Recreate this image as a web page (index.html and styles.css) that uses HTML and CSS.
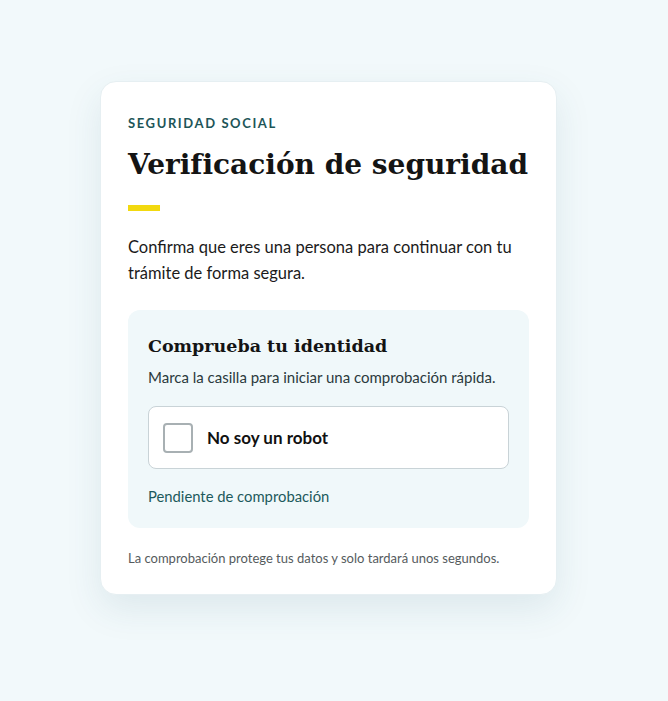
FILE: index.html
```html
<!DOCTYPE html>
<html lang="es">
<head>
<meta charset="utf-8">
<title>Verificación de seguridad</title>
<link rel="stylesheet" href="styles.css">
</head>
<body>
<main class="page">
  <section class="card">
    <p class="eyebrow">SEGURIDAD SOCIAL</p>
    <h1 class="title">Verificación de seguridad</h1>
    <div class="accent"></div>
    <p class="lead">Confirma que eres una persona para continuar con tu trámite de forma segura.</p>
    <div class="panel">
      <h2 class="panel-title">Comprueba tu identidad</h2>
      <p class="panel-text">Marca la casilla para iniciar una comprobación rápida.</p>
      <label class="check">
        <span class="box"></span>
        <span class="check-label">No soy un robot</span>
      </label>
      <p class="status">Pendiente de comprobación</p>
    </div>
    <p class="note">La comprobación protege tus datos y solo tardará unos segundos.</p>
  </section>
</main>
</body>
</html>
```
FILE: styles.css
```css
html, body {
  margin: 0;
  padding: 0;
}
body {
  background: #f2f9fb;
  font-family: "Lato", "Noto Sans", sans-serif;
  color: #1b1b1b;
}
.page {
  display: flex;
  justify-content: center;
  padding: 81px 11px 0 0;
  min-height: 701px;
  box-sizing: border-box;
}
.card {
  width: 457px;
  height: 514px;
  box-sizing: border-box;
  background: #ffffff;
  border-radius: 16px;
  border: 1px solid #e6eff2;
  box-shadow: 0 14px 36px rgba(40, 90, 110, 0.10);
  padding: 33px 27px 0 27px;
}
.eyebrow {
  margin: 0;
  font-size: 13px;
  font-weight: 700;
  letter-spacing: 1.6px;
  color: #1d5558;
  line-height: 16px;
}
.title {
  margin: 14px 0 0 0;
  font-family: "DejaVu Serif", "Liberation Serif", serif;
  font-weight: 700;
  font-size: 28px;
  line-height: 40px;
  color: #141414;
  letter-spacing: 0;
  white-space: nowrap;
}
.accent {
  width: 32px;
  height: 6px;
  background: #f2d90f;
  margin-top: 20px;
}
.lead {
  margin: 23px 0 0 0;
  font-size: 16.5px;
  line-height: 26px;
  color: #1b1b1b;
}
.panel {
  margin-top: 24px;
  background: #f0f8fa;
  border-radius: 12px;
  padding: 23px 20px 22px 20px;
}
.panel-title {
  margin: 0;
  font-family: "DejaVu Serif", "Liberation Serif", serif;
  font-weight: 700;
  font-size: 17.5px;
  line-height: 26px;
  color: #141414;
}
.panel-text {
  margin: 8px 0 0 0;
  font-size: 15px;
  line-height: 20px;
  color: #2b3a3d;
}
.check {
  margin-top: 19px;
  display: flex;
  align-items: center;
  gap: 14px;
  height: 63px;
  box-sizing: border-box;
  background: #ffffff;
  border: 1px solid #c9d3d7;
  border-radius: 8px;
  padding: 0 14px;
  cursor: pointer;
}
.box {
  width: 30px;
  height: 30px;
  box-sizing: border-box;
  border: 2px solid #a8b0b3;
  border-radius: 4px;
  background: #ffffff;
}
.check-label {
  font-size: 17px;
  font-weight: 700;
  color: #111111;
}
.status {
  margin: 17px 0 0 0;
  font-size: 14.8px;
  line-height: 20px;
  color: #1d5a5c;
}
.note {
  margin: 21px 0 0 0;
  font-size: 13px;
  line-height: 18px;
  color: #555b5d;
}
```
